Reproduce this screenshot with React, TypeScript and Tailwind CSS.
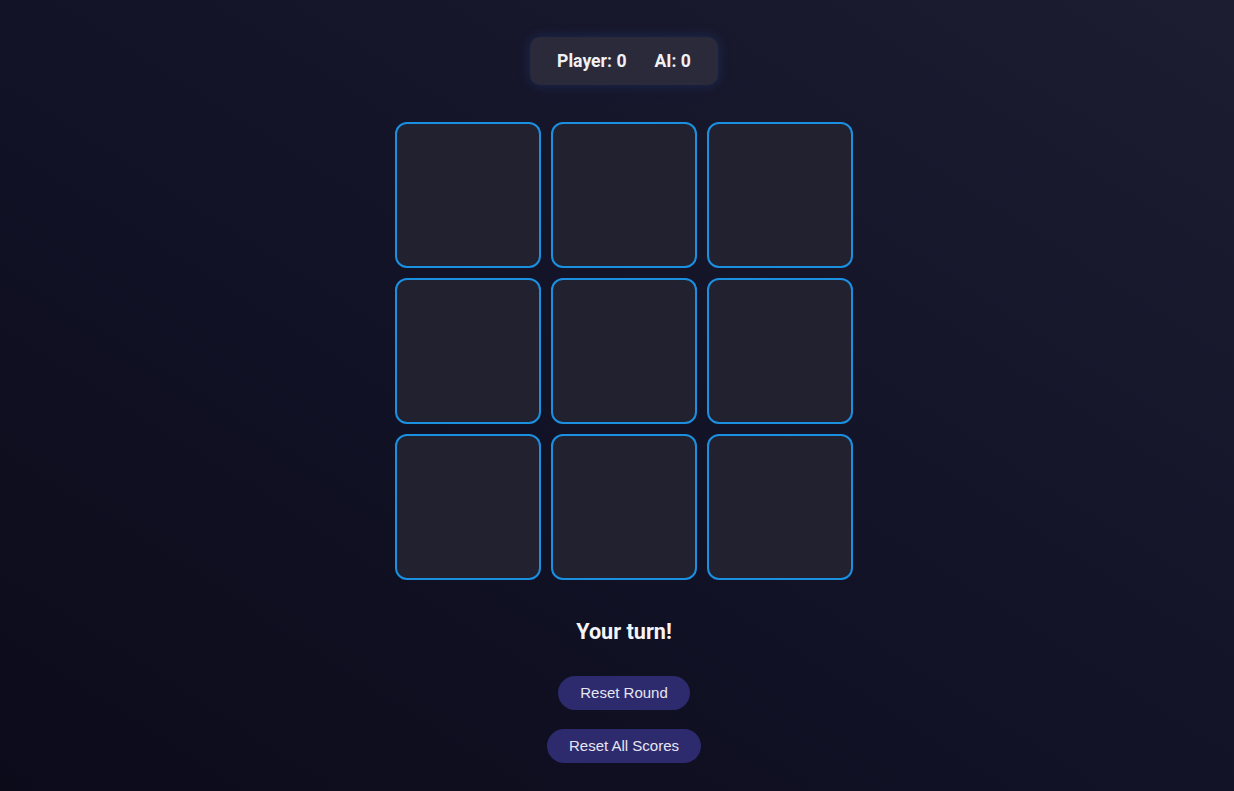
export default function App() {
  const cells = Array.from({ length: 9 });

  return (
    <div className="min-h-screen w-full pl-[14px] bg-gradient-to-tr from-[#0b0b1a] via-[#131328] to-[#1c1d31] flex flex-col items-center font-['Roboto',sans-serif] text-white">
      {/* Score */}
      <div className="mt-[37px] h-[48px] w-[188px] rounded-[10px] bg-[#2a2a3b] shadow-[0_0_12px_rgba(40,80,160,0.35)] flex items-center justify-center gap-[28px] text-[17.6px] font-bold text-[#f1f1f4]">
        <span>Player: 0</span>
        <span>AI: 0</span>
      </div>

      {/* Board */}
      <div className="mt-[37px] grid grid-cols-3 gap-[10px]">
        {cells.map((_, i) => (
          <button
            key={i}
            className="h-[146px] w-[146px] rounded-[12px] border-2 border-[#1b8fe0] bg-[#21212f]"
          />
        ))}
      </div>

      <p className="mt-[39px] text-[21.6px] font-bold leading-[26px] text-[#f5f5f8]">Your turn!</p>

      <div className="mt-[31px] flex flex-col items-center gap-[19px] font-['Liberation_Sans',Arial,sans-serif] text-[15px] text-[#e6e6f2]">
        <button className="h-[34px] w-[132px] rounded-full bg-[#2d2a6e]">Reset Round</button>
        <button className="h-[34px] w-[154px] rounded-full bg-[#2d2a6e]">Reset All Scores</button>
      </div>
    </div>
  );
}
